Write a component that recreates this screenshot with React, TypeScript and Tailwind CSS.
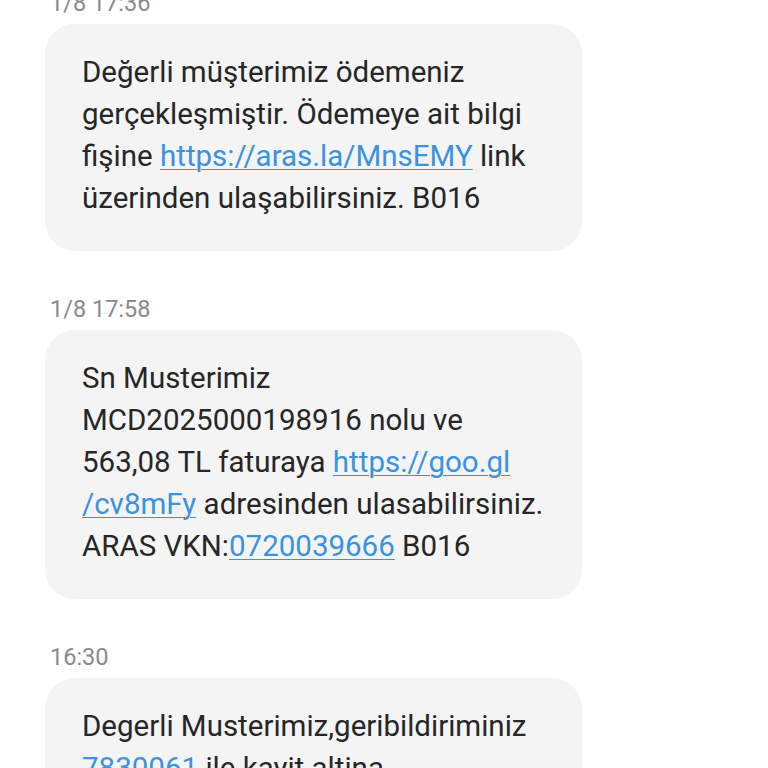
import React from "react";

type Part = string | { link: string };

interface Message {
  time: string;
  lines: Part[][];
}

const messages: Message[] = [
  {
    time: "1/8 17:36",
    lines: [
      ["Değerli müşterimiz ödemeniz"],
      ["gerçekleşmiştir. Ödemeye ait bilgi"],
      ["fişine ", { link: "https://aras.la/MnsEMY" }, " link"],
      ["üzerinden ulaşabilirsiniz. B016"],
    ],
  },
  {
    time: "1/8 17:58",
    lines: [
      ["Sn Musterimiz"],
      ["MCD2025000198916 nolu ve"],
      ["563,08 TL faturaya ", { link: "https://goo.gl" }],
      [{ link: "/cv8mFy" }, " adresinden ulasabilirsiniz."],
      ["ARAS VKN:", { link: "0720039666" }, " B016"],
    ],
  },
  {
    time: "16:30",
    lines: [
      ["Degerli Musterimiz,geribildiriminiz"],
      [{ link: "7830061" }, " ile kayit altina"],
      ["alinmistir."],
    ],
  },
];

function Bubble({ message }: { message: Message }) {
  return (
    <div>
      <div className="h-[30px] pl-[5px] text-[23.5px] leading-[30px] text-[#8a8a8a]">
        {message.time}
      </div>
      <div className="mt-[6px] w-[537px] rounded-[30px] bg-[#f4f4f4] pb-[32px] pl-[37px] pr-[20px] pt-[27px]">
        {message.lines.map((line, i) => (
          <div
            key={i}
            className="whitespace-pre text-[29.5px] leading-[42px] text-[#262626]"
          >
            {line.map((part, j) =>
              typeof part === "string" ? (
                <span key={j}>{part}</span>
              ) : (
                <span
                  key={j}
                  className="text-[#3a93e0] underline decoration-1 underline-offset-[3px]"
                >
                  {part.link}
                </span>
              )
            )}
          </div>
        ))}
      </div>
    </div>
  );
}

export default function App() {
  return (
    <div
      className="h-[768px] w-[768px] overflow-hidden bg-white"
      style={{ fontFamily: "Roboto, 'Noto Sans', sans-serif" }}
    >
      <div className="-mt-[12px] flex flex-col gap-[43px] pl-[45px]">
        {messages.map((m, i) => (
          <Bubble key={i} message={m} />
        ))}
      </div>
    </div>
  );
}
